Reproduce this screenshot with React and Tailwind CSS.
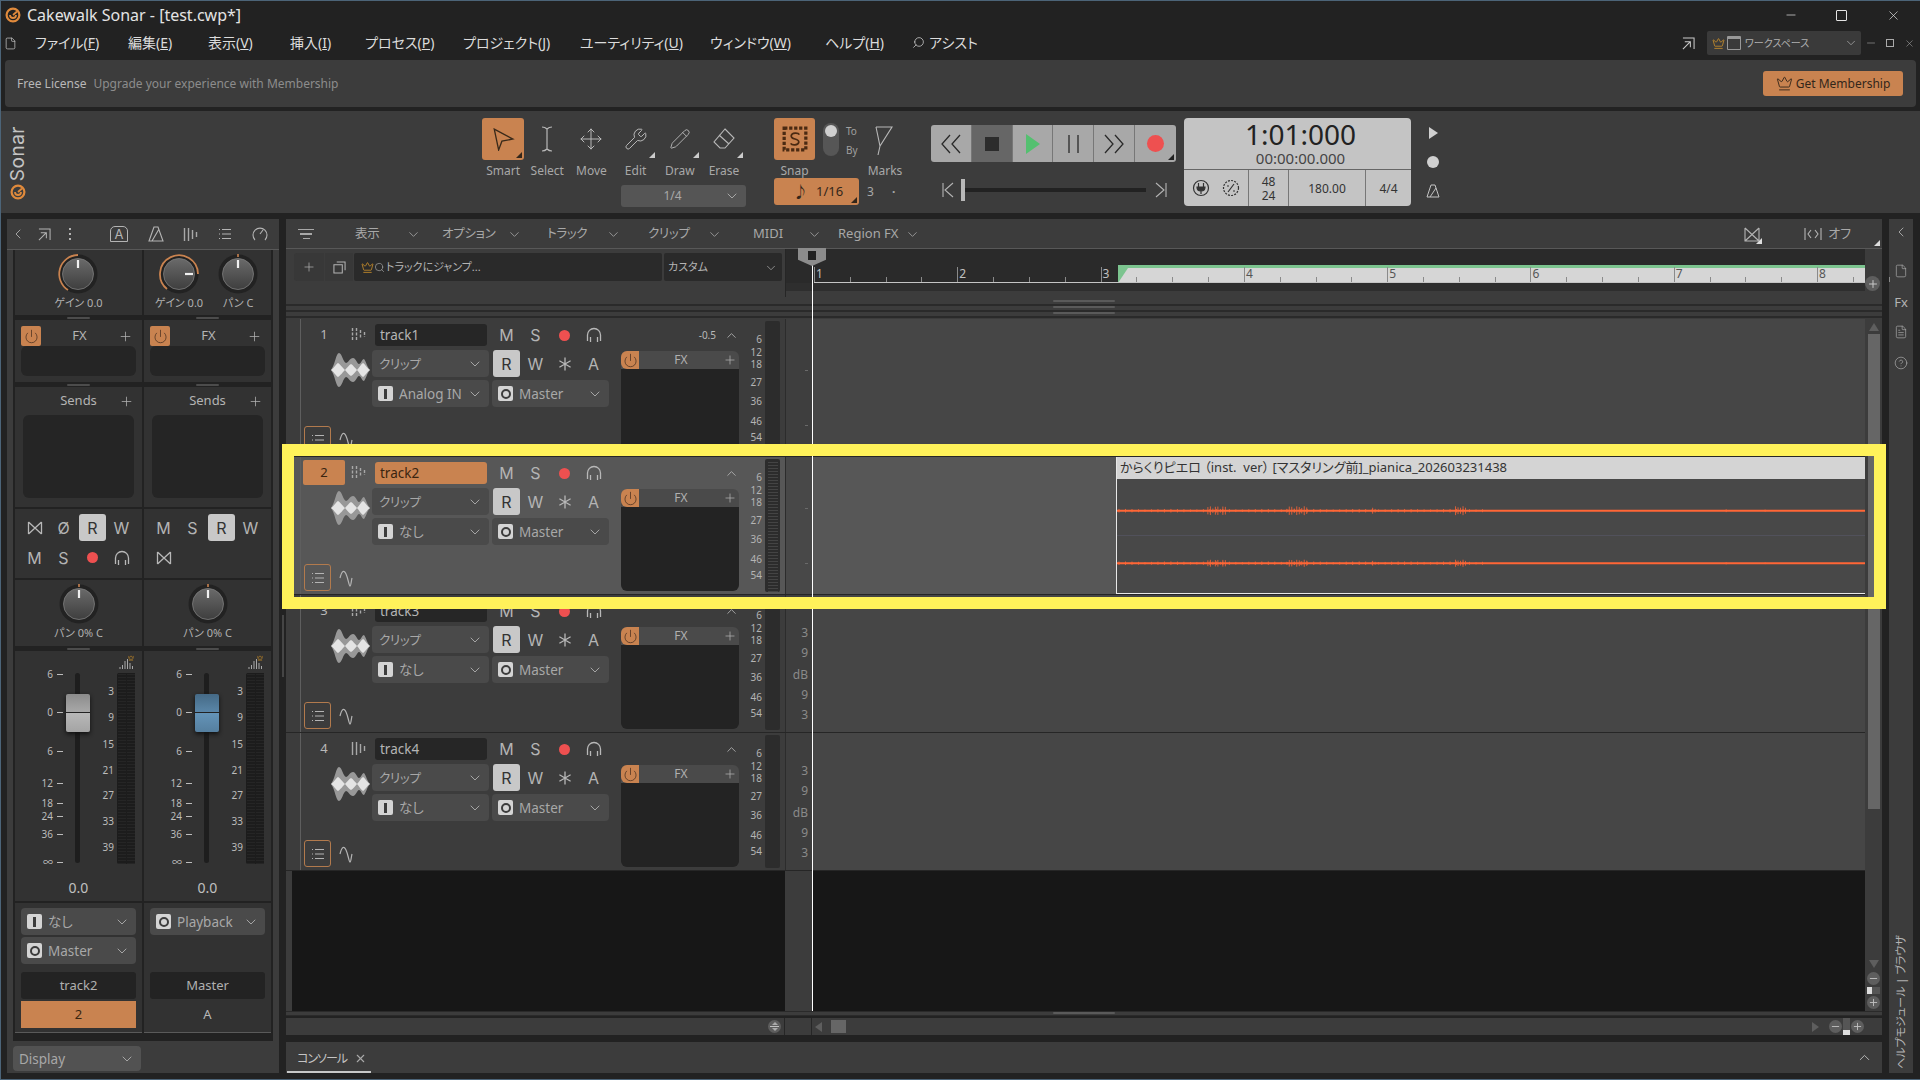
import React from 'react';
import { ChevronDown, ChevronUp, ChevronLeft, Plus, Power, X, Minus, Move, Wrench, Pencil, Search, Crown, File, HelpCircle, FileText } from 'lucide-react';

const ORANGE = 'bg-[#c98350]';

const CH = ({ className = 'w-4 h-4 text-[#b4b4b4]' }) => <ChevronDown className={className} strokeWidth={1.3} />;

const Corner = ({ className = 'border-b-[#ddd]' }) => (
  <span className={`absolute right-[2px] bottom-[2px] w-0 h-0 border-l-[6px] border-l-transparent border-b-[6px] ${className}`} />
);

function Logo({ className }) {
  return (
    <svg viewBox="0 0 16 16" className={className} fill="none">
      <circle cx="8" cy="8" r="6.4" stroke="#e08a3c" strokeWidth="2.2" />
      <path d="M8 8 L12 4.5 M5 8 a3 3 0 0 0 6 0" stroke="#e08a3c" strokeWidth="1.8" />
    </svg>
  );
}

function Bowtie() {
  return (
    <svg viewBox="0 0 16 16" className="w-4 h-4" fill="none" stroke="#b8b8b8" strokeWidth="1.3">
      <path d="M1.5 2 V14 M14.5 2 V14 M1.5 2 L14.5 14 M1.5 14 L14.5 2" />
    </svg>
  );
}

function Bars({ className = 'w-[15px] h-[15px]', dots }) {
  return (
    <svg viewBox="0 0 15 15" className={className} stroke="#a8a8a8" strokeWidth="1.4">
      <path d="M1.5 1 V14 M5.5 1 V14 M9.5 3 V12 M13.5 5 V10" strokeDasharray={dots ? '3 1.5' : undefined} />
    </svg>
  );
}

function ListIcon({ className = 'w-[14px] h-[14px]' }) {
  return (
    <svg viewBox="0 0 14 14" className={className} stroke="#b4b4b4" strokeWidth="1.2">
      <path d="M4 2.5 H13 M4 7 H13 M4 11.5 H13 M1 2.5 H2 M1 7 H2 M1 11.5 H2" />
    </svg>
  );
}

function Phones({ className = 'w-[16px] h-[16px]' }) {
  return (
    <svg viewBox="0 0 16 16" className={className} fill="none" stroke="#b8b8b8" strokeWidth="1.3">
      <path d="M1.5 14 V8 A6.5 6.5 0 0 1 14.5 8 V14 M4.5 10 V15 M11.5 10 V15" />
    </svg>
  );
}

function Star() {
  return (
    <svg viewBox="0 0 14 14" className="w-[14px] h-[14px]" fill="none" stroke="#b8b8b8" strokeWidth="1.3">
      <path d="M7 0.5 V13.5 M1.4 3.8 L12.6 10.2 M12.6 3.8 L1.4 10.2" />
    </svg>
  );
}

function WaveLogo() {
  return (
    <svg viewBox="0 0 39 34" className="w-[39px] h-[34px] shrink-0">
      <path d="M0 17 C4 12 5 0 8 0 C11 0 12 9 15 10 C17 10 19 5 22 5 C25 5 26 11 28 11 C30 11 31 6 33 6 C35 8 36 14 39 17 C36 20 35 26 33 28 C31 28 30 23 28 23 C26 23 25 29 22 29 C19 29 17 24 15 24 C12 25 11 34 8 34 C5 34 4 22 0 17 Z" fill="#989898" />
      <path d="M0 17 C3 15 5 11 7 10 C9 11 12 15 14 17 C16 15 18 12 20 11 C22 12 24 15 26 17 C28 15 30 11 32 10 C34 11 36 15 39 17 C36 19 34 23 32 24 C30 23 28 19 26 17 C24 19 22 22 20 23 C18 22 16 19 14 17 C12 19 9 23 7 24 C5 23 3 19 0 17 Z" fill="#e4e4e4" />
    </svg>
  );
}

function Curve() {
  return (
    <svg viewBox="0 0 16 20" className="w-[16px] h-[20px]" fill="none" stroke="#b4b4b4" strokeWidth="1.2">
      <path d="M1 10 C3 2 5 2 7 6 C9 10 10 18 11 18 C12 18 12 14 13 10" />
    </svg>
  );
}

function Knob({ arc, angle = 0, tick }) {
  const rad = ((angle - 90) * Math.PI) / 180;
  return (
    <svg viewBox="0 0 44 44" className="w-[44px] h-[44px]">
      <defs>
        <linearGradient id="knobFill" x1="0" y1="0" x2="0" y2="1">
          <stop offset="0" stopColor="#6a6a6a" />
          <stop offset="1" stopColor="#3e3e3e" />
        </linearGradient>
      </defs>
      <circle cx="22" cy="22" r="19.5" fill="#222" />
      {arc && <path d={arc} fill="none" stroke="#c98350" strokeWidth="1.8" />}
      {tick && <path d="M22 2 V5" stroke="#c98350" strokeWidth="1.6" />}
      <circle cx="22" cy="22" r="15.5" fill="url(#knobFill)" stroke="#7c7c7c" strokeWidth="0.8" />
      <path d={`M${22 + 6 * Math.cos(rad)} ${22 + 6 * Math.sin(rad)} L${22 + 14 * Math.cos(rad)} ${22 + 14 * Math.sin(rad)}`} stroke="#f0f0f0" strokeWidth="2.2" />
    </svg>
  );
}

function RouteBadge({ kind }) {
  return (
    <span className="w-[15px] h-[15px] rounded-[2px] bg-[#d4d4d4] flex items-center justify-center shrink-0">
      {kind === 'I'
        ? <span className="w-[3px] h-[10px] bg-[#3c3c3c]" />
        : <span className="w-[10px] h-[10px] rounded-full border-[2.5px] border-[#3c3c3c]" />}
    </span>
  );
}

function Drop({ kind, label, className = '', bg = 'bg-[#4a4a4a]', labelClass = 'ml-[6px]' }) {
  return (
    <div className={`h-[27px] rounded-[4px] ${bg} flex items-center pl-[6px] pr-[6px] text-[13.5px] text-[#a8a8a8] ${className}`}>
      {kind && <RouteBadge kind={kind} />}
      <span className={`flex-1 truncate pt-px ${labelClass}`}>{label}</span>
      <CH />
    </div>
  );
}

function Sep() {
  return (
    <div className="h-[5px] flex justify-center items-center">
      <span className="w-[23px] h-[2px] rounded-full bg-[#4c4c4c]" />
    </div>
  );
}

const Letter = ({ children, active }) => (
  <span className={`w-[27px] h-[27px] rounded-[3px] flex items-center justify-center text-[16px] [font-family:Inter,sans-serif] ${active ? 'bg-[#c8c8c8] text-[#333]' : 'text-[#b4b4b4]'}`}>
    {children}
  </span>
);

const Rec = () => <span className="w-[11px] h-[11px] rounded-full bg-[#ee5050]" />;

const dbMarks = [
  ['6', 23], ['0', 61], ['6', 100], ['12', 132], ['18', 152], ['24', 165], ['36', 183], ['∞', 211],
];
const meterMarks = [
  ['3', 40], ['9', 66], ['15', 93], ['21', 119], ['27', 144], ['33', 170], ['39', 196],
];

function Fader({ blue }) {
  return (
    <div className="h-[250px] bg-[#323232] relative text-[10px] text-[#bcbcbc]">
      {dbMarks.map(([t, y]) => (
        <div key={t + y} className="absolute left-[10px] w-[38px] flex items-center justify-end h-[12px] -mt-[6px]" style={{ top: y }}>
          <span>{t}</span>
          <span className="ml-[4px] w-[6px] h-px bg-[#bcbcbc]" />
        </div>
      ))}
      <div className="absolute left-[60px] top-[22px] w-[5px] h-[190px] rounded-full bg-[#1e1e1e]" />
      <div className="absolute left-[51px] top-[43px] w-[24px] h-[38px] rounded-[2px] shadow-[0_2px_4px_#111] flex flex-col">
        <div className={`h-[19px] border-b border-[#222] rounded-t-[2px] bg-gradient-to-b ${blue ? 'from-[#456a86] to-[#5a86a8]' : 'from-[#8c8c8c] to-[#a8a8a8]'}`} />
        <div className={`h-[19px] rounded-b-[2px] bg-gradient-to-b ${blue ? 'from-[#6494b8] to-[#557f9f]' : 'from-[#b8b8b8] to-[#a4a4a4]'}`} />
      </div>
      {meterMarks.map(([t, y]) => (
        <div key={t} className="absolute left-[85px] w-[14px] text-right h-[12px] leading-[12px] -mt-[6px]" style={{ top: y }}>{t}</div>
      ))}
      <svg viewBox="0 0 15 11" className="absolute left-[104px] top-[7px] w-[15px] h-[11px]" stroke="#a8a8a8" strokeWidth="1">
        <path d="M1 11 V9 M3.5 11 V7 M6 11 V3 M8.5 11 V1 M11 11 V5 M13.5 11 V8" />
      </svg>
      <Crown className="absolute left-[113px] top-[4px] w-[6px] h-[6px] text-[#d6962a]" />
      <div className="absolute left-[102px] top-[22px] w-[18px] h-[191px] rounded-[2px] bg-[#1c1c1c] flex justify-center gap-[1px]">
        <span className="w-[8px] bg-[repeating-linear-gradient(0deg,#252525_0px,#252525_1px,#1c1c1c_1px,#1c1c1c_3px)]" />
        <span className="w-[8px] bg-[repeating-linear-gradient(0deg,#252525_0px,#252525_1px,#1c1c1c_1px,#1c1c1c_3px)]" />
      </div>
      <div className="absolute left-0 right-0 top-[227px] text-center text-[14px] leading-[20px] text-[#c0c0c0]">0.0</div>
    </div>
  );
}

function Strip({ knobs, letters, routes, name, number, numberActive, blue }) {
  return (
    <div className="w-[127px] flex flex-col">
      <div className="h-[65px] bg-[#323232] flex justify-center gap-[13px]">{knobs}</div>
      <Sep />
      <div className="h-[62px] bg-[#323232] px-[6px] pt-[6px]">
        <div className="h-[20px] flex items-center text-[13px] text-[#b4b4b4]">
          <span className={`w-[20px] h-[20px] rounded-[2px] ${ORANGE} flex items-center justify-center`}>
            <Power className="w-[15px] h-[15px] text-[#4a3020]" strokeWidth={1.2} />
          </span>
          <span className="flex-1 text-center">FX</span>
          <Plus className="w-[15px] h-[15px] mr-[3px]" strokeWidth={1.2} />
        </div>
        <div className="h-[30px] rounded-[6px] bg-[#252525]" />
      </div>
      <Sep />
      <div className="h-[120px] bg-[#323232] px-[8px] pt-[5px]">
        <div className="h-[18px] flex items-center text-[13px] text-[#b4b4b4]">
          <span className="flex-1 text-center pl-[15px]">Sends</span>
          <Plus className="w-[15px] h-[15px]" strokeWidth={1.2} />
        </div>
        <div className="mt-[5px] h-[83px] rounded-[6px] bg-[#252525]" />
      </div>
      <div className="h-[2px]" />
      <div className="h-[69px] bg-[#323232] px-[5px] pt-[5px] grid grid-cols-[repeat(4,29px)] auto-rows-[30px] justify-items-center items-start">
        {letters}
      </div>
      <div className="h-[2px]" />
      <div className="h-[66px] bg-[#323232] flex flex-col items-center pt-[2px]">
        <Knob tick />
        <span className="mt-[1px] text-[11px] leading-[12px] text-[#b0b0b0]">パン 0% C</span>
      </div>
      <Sep />
      <Fader blue={blue} />
      <div className="h-[130px] mt-[2px] bg-[#323232] px-[6px] pt-[5px] border-b border-[#5a5a5a] flex flex-col">
        <div className="h-[56px] flex flex-col gap-[2px]">{routes}</div>
        <div className="mt-[8px] h-[27px] rounded-[3px] bg-[#232323] flex items-center justify-center text-[13px] text-[#b0b0b0]">{name}</div>
        <div className={`mt-[2px] h-[27px] flex items-center justify-center text-[13px] ${numberActive ? `${ORANGE} text-[#3a2510]` : 'text-[#b8b8b8]'}`}>{number}</div>
      </div>
    </div>
  );
}

const KnobLabeled = ({ label, ...rest }) => (
  <div className="flex flex-col items-center pt-[2px]">
    <Knob {...rest} />
    <span className="mt-[1px] text-[11px] leading-[12px] text-[#b0b0b0] whitespace-nowrap">{label}</span>
  </div>
);

function LeftPanel() {
  return (
    <div className="w-[272px] flex flex-col bg-[#3c3c3c]">
      <div className="h-[31px] flex items-center border-b border-[#585858] text-[#b4b4b4] pl-[3px]">
        <ChevronLeft className="w-[16px] h-[16px]" strokeWidth={1.3} />
        <svg viewBox="0 0 14 14" className="ml-[12px] w-[13px] h-[13px]" fill="none" stroke="#b4b4b4" strokeWidth="1.1"><path d="M1 1 H13 V13 M9 5 L1 13 M3 5 H9 V11" /></svg>
        <span className="ml-[18px] w-[2px] flex flex-col gap-[3px]"><i className="h-[2px] bg-[#b4b4b4]" /><i className="h-[2px] bg-[#b4b4b4]" /><i className="h-[2px] bg-[#b4b4b4]" /></span>
        <span className="ml-[39px] w-[18px] h-[16px] border border-[#b4b4b4] rounded-t-[5px] flex items-center justify-center text-[13px] leading-none [font-family:Inter,sans-serif]">A</span>
        <svg viewBox="0 0 16 16" className="ml-[20px] w-[16px] h-[16px]" fill="none" stroke="#b4b4b4" strokeWidth="1.1"><path d="M6 1 L1 15 H15 L10 1 Z M4 15 L11 3" /></svg>
        <span className="ml-[19px]"><Bars /></span>
        <span className="ml-[20px]"><ListIcon /></span>
        <svg viewBox="0 0 16 16" className="ml-[20px] w-[16px] h-[16px]" fill="none" stroke="#b4b4b4" strokeWidth="1.1"><path d="M3 14 A7 7 0 1 1 13 14 M8 8 L11 4" /></svg>
      </div>
      <div className="h-[791px] flex pl-[6px] pr-[6px]">
        <div className="flex gap-[2px] bg-[#222] px-[2px]">
          <Strip
            knobs={<KnobLabeled label="ゲイン 0.0" arc="M12 38 A19 19 0 0 1 22 3" />}
            letters={<>
              <span className="h-[27px] flex items-center"><Bowtie /></span>
              <span className="h-[27px] flex items-center"><Letter>Ø</Letter></span>
              <Letter active>R</Letter>
              <Letter>W</Letter>
              <Letter>M</Letter>
              <Letter>S</Letter>
              <span className="h-[27px] flex items-center"><Rec /></span>
              <span className="h-[27px] flex items-center"><Phones /></span>
            </>}
            routes={<>
              <Drop kind="I" label="なし" />
              <Drop kind="O" label="Master" />
            </>}
            name="track2"
            number="2"
            numberActive
          />
          <Strip
            knobs={<>
              <KnobLabeled label="ゲイン 0.0" angle={90} arc="M10 37 A19 19 0 1 1 41 22" />
              <KnobLabeled label="パン C" tick />
            </>}
            letters={<>
              <Letter>M</Letter>
              <Letter>S</Letter>
              <Letter active>R</Letter>
              <Letter>W</Letter>
              <span className="h-[27px] flex items-center"><Bowtie /></span>
            </>}
            routes={<Drop kind="O" label="Playback" />}
            name="Master"
            number="A"
            blue
          />
        </div>
      </div>
      <div className="h-[32px] pl-[6px] pt-[5px]">
        <Drop label="Display" className="w-[128px] !h-[25px] !bg-[#525252]" labelClass="ml-0" />
      </div>
    </div>
  );
}

function Track({ n, name, input, selected, vol, db }) {
  const rowBg = selected ? 'bg-[#575757]' : 'bg-[#3c3c3c]';
  const ddBg = 'bg-[#4a4a4a]';
  return (
    <div className="h-[138px] flex border-b-[1.5px] border-[#262626]">
      <div className="w-[6px] bg-[#3c3c3c]" />
      <div className={`w-[493px] h-full flex ${rowBg}`}>
        <div className="w-[9px] border-r border-[#5e5e5e]" />
        <div className="w-[71px] flex flex-col pl-[2px]">
          <div className="mt-[3px] h-[25px] flex items-center">
            <span className={`w-[42px] h-[25px] rounded-[2px] flex items-center justify-center text-[13px] ${selected ? `${ORANGE} text-[#3a2510]` : 'text-[#b8b8b8]'}`}>{n}</span>
            <span className="ml-[6px]"><Bars dots={n < 4} /></span>
          </div>
          <div className="mt-[6px] ml-[28px]"><WaveLogo /></div>
          <div className="mt-auto mb-[3px] ml-[1px] flex items-center">
            <span className="w-[27px] h-[27px] rounded-[3px] border border-[#b27a4d] flex items-center justify-center"><ListIcon /></span>
            <span className="ml-[8px]"><Curve /></span>
          </div>
        </div>
        <div className="w-[237px] flex flex-col pt-[5px]">
          <div className="h-[22px] flex items-center">
            <div className={`ml-[3px] w-[112px] h-[22px] rounded-[3px] flex items-center pl-[5px] text-[13.5px] ${selected ? `${ORANGE} text-[#3a2510]` : 'bg-[#262626] text-[#b4b4b4]'}`}>{name}</div>
            <div className="ml-[5px] w-[116px] grid grid-cols-4 justify-items-center items-center">
              <Letter>M</Letter>
              <Letter>S</Letter>
              <Rec />
              <Phones />
            </div>
          </div>
          <div className="mt-[4px] h-[27px] flex items-center">
            <Drop label="クリップ" className="w-[117px]" bg={ddBg} labelClass="ml-[1px] mt-[2px] text-[12.5px] tracking-[-0.3px]" />
            <div className="ml-[3px] w-[116px] grid grid-cols-4 justify-items-center items-center">
              <Letter active>R</Letter>
              <Letter>W</Letter>
              <Star />
              <Letter>A</Letter>
            </div>
          </div>
          <div className="mt-[3px] h-[27px] flex items-center">
            <Drop kind="I" label={input} className="w-[117px]" bg={ddBg} />
            <Drop kind="O" label="Master" className="ml-[3px] w-[117px]" bg={ddBg} />
          </div>
        </div>
        <div className="ml-[12px] w-[118px] flex flex-col">
          <div className="h-[32px] flex items-center justify-end text-[#b8b8b8]">
            {vol && <span className="mr-[8px] text-[10px]">{vol}</span>}
            <ChevronUp className="w-[15px] h-[15px]" strokeWidth={1.3} />
          </div>
          <div className="h-[18px] bg-[#4a4a4a] rounded-t-[6px] flex items-center text-[12px] text-[#b0b0b0]">
            <span className={`w-[18px] h-[18px] rounded-l-[6px] ${ORANGE} flex items-center justify-center`}>
              <Power className="w-[15px] h-[15px] text-[#4a3020]" strokeWidth={1.2} />
            </span>
            <span className="flex-1 text-center">FX</span>
            <Plus className="w-[14px] h-[14px] mr-[2px]" strokeWidth={1.3} />
          </div>
          <div className="h-[84px] rounded-b-[6px] bg-[#232323]" />
        </div>
        <div className="w-[26px] relative text-[10px] text-[#b4b4b4]">
          {[['6', 20], ['12', 33], ['18', 45], ['27', 63], ['36', 82], ['46', 102], ['54', 118]].map(([t, y]) => (
            <span key={t} className="absolute right-[3px] leading-[12px] -mt-[6px]" style={{ top: y }}>{t}</span>
          ))}
        </div>
        <div className="my-[2px] w-[15px] rounded-[2px] bg-[#2c2c2c] flex justify-center">
          {selected && <span className="w-[10px] mt-[2px] bg-[repeating-linear-gradient(0deg,#444_0px,#444_1px,#2c2c2c_1px,#2c2c2c_3px)]" />}
        </div>
        <div className="w-[3px]" />
      </div>
      <div className={`w-[28px] relative border-l border-[#2c2c2c] text-[12px] text-[#8a8a8a] ${selected ? 'bg-[#484848]' : 'bg-[#3e3e3e]'}`}>
        {db
          ? [['3', 38], ['9', 58], ['dB', 80], ['9', 100], ['3', 120]].map(([t, y]) => (
              <span key={t + y} className="absolute right-[5px] leading-[14px] -mt-[7px]" style={{ top: y }}>{t}</span>
            ))
          : [51, 106].map((y) => <span key={y} className="absolute right-[5px] w-[3px] h-px bg-[#6a6a6a]" style={{ top: y }} />)}
      </div>
      <div className={`flex-1 ${selected ? 'bg-[#575757]' : 'bg-[#464646]'} flex`}>
        {selected && <Clip />}
      </div>
    </div>
  );
}

function wavePath(y, scale = 1) {
  const bursts = [[91, 110, 4.5], [170, 192, 4.5], [256, 260, 3], [339, 350, 4.5], [610, 611, 2.5], [649, 650, 1.5]];
  let d = '';
  for (const [a, b, h] of bursts) {
    for (let x = a; x <= b; x += 2.5) {
      const amp = h * scale * (0.4 + 0.6 * Math.abs(Math.sin(x * 1.7)));
      d += `M${x} ${y - amp} V${y + amp} `;
    }
  }
  for (let x = 2; x < 370; x += 6.5) {
    const amp = 1.2 + 0.6 * Math.abs(Math.sin(x * 0.9));
    d += `M${x} ${y - amp} V${y + amp} `;
  }
  return d;
}

function Clip() {
  return (
    <div className="ml-[303px] flex-1 flex flex-col border-l border-b border-[#e8e8e8] bg-[#484848]">
      <div className="h-[22px] bg-[#d4d4d4] flex items-center pl-[3px] text-[13px] text-[#333] whitespace-pre">
        からくりピエロ （inst.  ver） [マスタリング前]_pianica_202603231438
      </div>
      <svg viewBox="0 0 749 115" preserveAspectRatio="none" className="flex-1 w-full">
        <path d="M0 57 H749" stroke="#52525c" strokeWidth="1" />
        <path d="M0 32 H749 M0 85 H749" stroke="#ff6636" strokeWidth="2" />
        <path d={wavePath(32) + wavePath(85, 0.8)} stroke="#ff6636" strokeWidth="0.8" fill="none" />
      </svg>
    </div>
  );
}

function Ruler() {
  const nums = ['1', '2', '3', '4', '5', '6', '7', '8'];
  return (
    <div className="w-[1080px] flex flex-col relative border-l border-[#262626]">
      <div className="h-[34px] bg-[#2a2a2a] relative">
        <div className="absolute left-[332px] right-0 top-[16px] h-[18px] bg-[#7cc48f]">
          <div className="h-[15px] mt-[3px] bg-[#d6d6d6] [clip-path:polygon(10px_0,100%_0,100%_100%,0_100%)]" />
        </div>
        <div className="absolute left-[28px] right-0 bottom-0 h-[15px] flex border-b border-[#c4c4c4]">
          {nums.map((t, i) => (
            <div key={t} className="w-[143.3px] shrink-0 flex items-end">
              <div className={`w-1/4 h-[15px] border-l border-[#8a8a8a] pl-[1px] text-[12px] leading-[14px] ${i < 3 ? 'text-[#c0c0c0]' : 'text-[#555]'}`}>{t}</div>
              <div className="w-1/4 h-[5px] border-l border-[#8a8a8a]" />
              <div className="w-1/4 h-[5px] border-l border-[#8a8a8a]" />
              <div className="w-1/4 h-[5px] border-l border-[#8a8a8a]" />
            </div>
          ))}
        </div>
      </div>
      <div className="h-[8px] bg-[#2e2e2e]" />
      <div className="h-[6px] bg-[#3c3c3c]" />
    </div>
  );
}

const HeaderMenu = ({ label, className, latin }) => (
  <div className={`flex items-center justify-between shrink-0 ${className}`}>
    <span className={`${latin ? 'text-[13px]' : 'text-[12.5px] tracking-[-0.3px]'} text-[#a8a8a8] whitespace-nowrap`}>{label}</span>
    <CH className="w-[15px] h-[15px] text-[#a8a8a8]" />
  </div>
);

function CenterPanel() {
  return (
    <div className="w-[1596px] flex flex-col relative">
      <div className="h-[30px] bg-[#3c3c3c] border-b border-[#585858] flex items-center pl-[12px] pt-[1px] relative">
        <span className="w-[16px] flex flex-col gap-[3px] items-center">
          <i className="w-[16px] h-[1.5px] bg-[#a8a8a8]" /><i className="w-[12px] h-[1.5px] bg-[#a8a8a8]" /><i className="w-[7px] h-[1.5px] bg-[#a8a8a8]" />
        </span>
        <div className="ml-[41px] flex items-center">
          <HeaderMenu label="表示" className="w-[66px]" />
          <HeaderMenu label="オプション" className="w-[80px] ml-[21px]" />
          <HeaderMenu label="トラック" className="w-[74px] ml-[25px]" />
          <HeaderMenu label="クリップ" className="w-[74px] ml-[27px]" />
          <HeaderMenu label="MIDI" className="w-[69px] ml-[31px]" latin />
          <HeaderMenu label="Region FX" className="w-[82px] ml-[16px]" latin />
        </div>
        <div className="ml-auto flex items-center text-[13px] text-[#a8a8a8] pr-[31px]">
          <span className="relative w-[24px] h-[24px] flex items-center justify-center">
            <svg viewBox="0 0 16 16" className="w-[16px] h-[16px]" fill="none" stroke="#b4b4b4" strokeWidth="1.1"><path d="M1 2 V15 H15 V2 M1 2 L15 15 M15 2 L1 15" /></svg>
            <Corner />
          </span>
          <span className="ml-[40px] flex items-center gap-[6px]">
            <svg viewBox="0 0 18 14" className="w-[18px] h-[14px]" fill="none" stroke="#b4b4b4" strokeWidth="1.1"><path d="M1 1 V13 M17 1 V13 M7 3 L4 7 L7 11 M11 3 L14 7 L11 11" /></svg>
            オフ
          </span>
        </div>
        <Corner />
      </div>
      <div className="h-[48px] flex">
        <div className="w-[499px] bg-[#3c3c3c] flex pl-[8px] pt-[4px] text-[#b4b4b4]">
          <span className="w-[30px] h-[28px] rounded-l-[3px] bg-[#383838] flex items-center justify-center"><Plus className="w-[14px] h-[14px]" strokeWidth={1.2} /></span>
          <span className="ml-px w-[28px] h-[28px] bg-[#383838] flex items-center justify-center">
            <svg viewBox="0 0 14 14" className="w-[13px] h-[13px]" fill="none" stroke="#b4b4b4" strokeWidth="1.1"><path d="M1 4 H10 V13 H1 Z M4 1 H13 V10" /></svg>
          </span>
          <div className="ml-px w-[308px] h-[28px] bg-[#2a2a2a] rounded-[2px] flex items-center pl-[7px] text-[11px]">
            <Crown className="w-[13px] h-[13px] text-[#d6962a]" strokeWidth={1.4} />
            <Search className="w-[11px] h-[11px]" strokeWidth={1.3} />
            <span className="ml-[1px] pt-px">トラックにジャンプ...</span>
          </div>
          <div className="ml-[2px] w-[118px] h-[28px] bg-[#2a2a2a] rounded-[2px] flex items-center justify-between px-[4px] pt-px text-[11px]">
            カスタム<CH className="w-[14px] h-[14px] text-[#a8a8a8]" />
          </div>
        </div>
        <Ruler />
        <div className="w-[17px] bg-[#3c3c3c]" />
      </div>
      <div className="h-[22px] bg-[#3c3c3c] flex flex-col pt-[3px]">
        {[0, 1, 2].map((i) => (
          <div key={i} className="h-[6px] border-b-2 border-[#2a2a2a] flex justify-center">
            <span className="w-[62px] h-[2px] rounded-full bg-[#5a5a5a]" />
          </div>
        ))}
      </div>
      <div className="h-[692px] flex bg-[#171717]">
        <div className="w-[1579px] flex flex-col">
          <Track n={1} name="track1" input="Analog IN" vol="-0.5" />
          <Track n={2} name="track2" input="なし" selected />
          <Track n={3} name="track3" input="なし" db />
          <Track n={4} name="track4" input="なし" db />
          <div className="flex-1 flex">
            <div className="w-[6px] bg-[#3c3c3c]" />
            <div className="w-[493px]" />
            <div className="w-[28px] bg-[#3c3c3c]" />
          </div>
        </div>
        <div className="w-[17px] bg-[#3c3c3c] flex flex-col items-center pt-[4px] pb-[2px]">
          <span className="w-0 h-0 border-x-[5px] border-x-transparent border-b-[8px] border-b-[#5e5e5e]" />
          <span className="mt-[3px] h-[475px] w-[12px] bg-[#666]" />
          <span className="mt-auto w-0 h-0 border-x-[5px] border-x-transparent border-t-[8px] border-t-[#5e5e5e]" />
          <span className="mt-[4px] w-[13px] h-[13px] rounded-full bg-[#5e5e5e] flex items-center justify-center"><Minus className="w-[11px] h-[11px] text-[#c0c0c0]" /></span>
          <span className="mt-[2px] w-[13px] h-[7px] bg-[#555] flex"><i className="w-[5px] bg-[#ddd]" /></span>
          <span className="mt-[2px] w-[13px] h-[13px] rounded-full bg-[#5e5e5e] flex items-center justify-center"><Plus className="w-[11px] h-[11px] text-[#c0c0c0]" /></span>
        </div>
      </div>
      <div className="h-[5px] bg-[#3c3c3c] border-y border-[#2a2a2a] flex justify-center">
        <span className="w-[62px] h-[2px] rounded-full bg-[#5a5a5a]" />
      </div>
      <div className="h-[2px]" />
      <div className="h-[17px] bg-[#3c3c3c] flex items-center">
        <div className="w-[499px] flex justify-end pr-[3px] border-r border-[#262626] h-full items-center">
          <span className="w-[13px] h-[13px] rounded-full bg-[#5e5e5e] flex flex-col items-center justify-center">
            <span className="w-0 h-0 border-x-[3px] border-x-transparent border-b-[3px] border-b-[#aaa]" />
            <i className="my-[1px] w-[9px] h-px bg-[#c0c0c0]" />
            <span className="w-0 h-0 border-x-[3px] border-x-transparent border-t-[3px] border-t-[#aaa]" />
          </span>
        </div>
        <div className="w-[27px] h-full border-r border-[#262626]" />
        <span className="ml-[3px] w-0 h-0 border-y-[5px] border-y-transparent border-r-[7px] border-r-[#5e5e5e]" />
        <span className="ml-[9px] w-[15px] h-[13px] bg-[#666]" />
        <span className="ml-auto w-0 h-0 border-y-[5px] border-y-transparent border-l-[7px] border-l-[#5e5e5e]" />
        <span className="ml-[10px] w-[13px] h-[13px] rounded-full bg-[#5e5e5e] flex items-center justify-center"><Minus className="w-[11px] h-[11px] text-[#c0c0c0]" /></span>
        <span className="ml-[1px] w-[7px] h-[17px] bg-[#555] flex items-end"><i className="w-[7px] h-[5px] bg-[#ddd]" /></span>
        <span className="ml-px mr-[18px] w-[13px] h-[13px] rounded-full bg-[#5e5e5e] flex items-center justify-center"><Plus className="w-[11px] h-[11px] text-[#c0c0c0]" /></span>
      </div>
      <div className="h-[7px]" />
      <div className="h-[31px] bg-[#3c3c3c] flex items-center">
        <div className="ml-px w-[84px] h-full flex items-center border-b-2 border-[#c8c8c8] pl-[10px] pt-[4px] text-[12px] tracking-[-1px] text-[#c4c4c4] whitespace-nowrap">
          コンソール
          <X className="ml-[7px] w-[13px] h-[13px] shrink-0 text-[#aaa]" strokeWidth={2} />
        </div>
        <ChevronUp className="ml-auto mr-[9px] w-[17px] h-[17px] text-[#c0c0c0]" strokeWidth={1.3} />
      </div>

      {/* playhead */}
      <div className="absolute left-[526px] top-[46px] h-[746px] w-px bg-white" />
      <div className="absolute left-[512px] top-[29px] w-[28px] h-[18px] bg-[#8c8c8c] [clip-path:polygon(0_0,100%_0,100%_65%,50%_100%,0_65%)] flex justify-center pt-[3px]">
        <span className="w-[8px] h-[9px] bg-[#222]" />
      </div>
      <span className="absolute left-[1579px] top-[57px] w-[15px] h-[15px] rounded-full bg-[#5e5e5e] flex items-center justify-center"><Plus className="w-[12px] h-[12px] text-[#c8c8c8]" /></span>
    </div>
  );
}

function RightRail() {
  return (
    <div className="w-[24px] ml-[7px] bg-[#3c3c3c] flex flex-col items-center pt-[5px] pb-[6px] text-[#b4b4b4]">
      <ChevronLeft className="w-[16px] h-[16px]" strokeWidth={1.3} />
      <File className="mt-[23px] w-[14px] h-[16px]" strokeWidth={1.1} />
      <span className="mt-[15px] text-[13px] leading-[16px]">Fx</span>
      <FileText className="mt-[14px] w-[14px] h-[16px]" strokeWidth={1.1} />
      <HelpCircle className="mt-[16px] w-[14px] h-[14px]" strokeWidth={1.1} />
      <div className="mt-auto h-[130px] w-[14px] flex items-center justify-center">
        <span className="-rotate-90 text-[11px] leading-[14px] whitespace-nowrap">ヘルプモジュール | ブラウザ</span>
      </div>
    </div>
  );
}

function Tool({ label, icon, active, corner }) {
  return (
    <div className="w-[44.5px] flex flex-col items-center">
      <div className={`relative w-[42px] h-[42px] rounded-[3px] flex items-center justify-center ${active ? ORANGE : ''}`}>
        {icon}
        {corner && <Corner className={active ? 'border-b-[#33261a]' : 'border-b-[#ccc]'} />}
      </div>
      <span className="mt-[3px] text-[12px] leading-[16px] text-[#a8a8a8]">{label}</span>
    </div>
  );
}

function TransportBtn({ children, pressed }) {
  return (
    <div className={`relative w-[41px] h-full flex items-center justify-center border-r border-[#777] last:border-r-0 ${pressed ? 'bg-[#666]' : 'bg-[#a8a8a8]'}`}>
      {children}
    </div>
  );
}

function Toolbar() {
  const grey = 'text-[#b8b8b8]';
  return (
    <div className="h-[102px] bg-[#3c3c3c] flex pl-[8px]">
      <div className="w-[18px] flex flex-col items-center justify-end pb-[13px]">
        <span className="[writing-mode:vertical-rl] rotate-180 text-[19px] leading-[18px] text-[#c4c4c4] tracking-[0.5px] [font-family:Inter,sans-serif]">Sonar</span>
        <Logo className="mt-[3px] w-[16px] h-[16px]" />
      </div>
      <div className="ml-[454px] w-[265px] flex flex-col pt-[7px]">
        <div className="flex">
          <Tool label="Smart" active corner icon={
            <svg viewBox="0 0 22 22" className="w-[24px] h-[24px]" fill="none" stroke="#3a2a1a" strokeWidth="1.2"><path d="M3 2 L20 11 L10 13 L7 21 Z" /></svg>
          } />
          <Tool label="Select" icon={
            <svg viewBox="0 0 14 26" className="w-[14px] h-[26px]" fill="none" stroke="#b8b8b8" strokeWidth="1.2"><path d="M2 1 C5 1 6 2 7 3 C8 2 9 1 12 1 M7 3 V23 M2 25 C5 25 6 24 7 23 C8 24 9 25 12 25" /></svg>
          } />
          <Tool label="Move" icon={<Move className={`w-[24px] h-[24px] ${grey}`} strokeWidth={1} />} />
          <Tool label="Edit" corner icon={<Wrench className={`w-[24px] h-[24px] ${grey}`} strokeWidth={1} />} />
          <Tool label="Draw" corner icon={<Pencil className={`w-[22px] h-[22px] ${grey}`} strokeWidth={1} />} />
          <Tool label="Erase" corner icon={
            <svg viewBox="0 0 24 24" className="w-[24px] h-[24px]" fill="none" stroke="#b8b8b8" strokeWidth="1.1"><path d="M13 2 L22 11 L13 21 H8 L2 15 Z M7 8 L17 17" /></svg>
          } />
        </div>
        <div className="mt-[6px] ml-[140px] w-[125px] h-[22px] rounded-[3px] bg-[#555] flex items-center text-[12px] text-[#a8a8a8] pr-[6px]">
          <span className="flex-1 text-center">1/4</span><CH />
        </div>
      </div>
      <div className="ml-[28px] w-[136px] flex flex-col pt-[7px]">
        <div className="flex h-[42px]">
          <div className={`w-[41px] h-[42px] rounded-[3px] ${ORANGE} flex items-center justify-center`}>
            <svg viewBox="0 0 24 24" className="w-[26px] h-[26px]" fill="none" stroke="#4a2a12" strokeWidth="1.5">
              <path d="M2 2 H22 V22 H2 Z" strokeDasharray="3 1.6" strokeWidth="3" />
              <path d="M16 8 C15 6 9 6 8.5 9 C8 13 16 11 15.5 15 C15 18 9 18 8 16" />
            </svg>
          </div>
          <div className="ml-[8px] mt-[5px] w-[16px] h-[33px] rounded-full bg-[#565656] pt-[2px] flex justify-center">
            <span className="w-[12px] h-[12px] rounded-full bg-[#cfcfcf]" />
          </div>
          <div className="ml-[7px] mt-[4px] flex flex-col text-[10px] leading-[19px] text-[#a0a0a0]"><span>To</span><span>By</span></div>
          <svg viewBox="0 0 18 30" className="ml-[17px] mt-[8px] w-[18px] h-[30px]" fill="none" stroke="#b8b8b8" strokeWidth="1.1"><path d="M1 1 H17 L5 20 L1 1 M5 20 L3 29" /></svg>
        </div>
        <div className="flex text-[12px] leading-[16px] text-[#a8a8a8] mt-[3px]">
          <span className="w-[41px] text-center">Snap</span>
          <span className="ml-[50px] w-[40px] text-center">Marks</span>
        </div>
        <div className="flex items-center mt-[-1px] h-[27px] text-[12px] text-[#a8a8a8]">
          <div className={`relative w-[85px] h-[27px] rounded-[3px] ${ORANGE} flex items-center text-[#33261a] pl-[19px]`}>
            <span className="text-[15px] leading-none">♪</span>
            <span className="ml-[8px] text-[13px]">1/16</span>
            <Corner className="border-b-[#33261a]" />
          </div>
          <span className="ml-[8px]">3</span>
          <span className="ml-[18px] font-bold">·</span>
        </div>
      </div>
      <div className="ml-[21px] w-[245px] flex flex-col pt-[14px]">
        <div className="h-[37px] rounded-[3px] overflow-hidden flex">
          <TransportBtn>
            <svg viewBox="0 0 22 20" className="w-[22px] h-[20px]" fill="none" stroke="#2a2a2a" strokeWidth="1.3"><path d="M10 1 L2 10 L10 19 M20 1 L12 10 L20 19" /></svg>
          </TransportBtn>
          <TransportBtn pressed><span className="w-[14px] h-[14px] bg-[#2c2c2c]" /></TransportBtn>
          <TransportBtn><span className="w-0 h-0 border-y-[10px] border-y-transparent border-l-[14px] border-l-[#54c070]" /></TransportBtn>
          <TransportBtn><span className="w-[11px] h-[18px] border-x-2 border-[#555]" /></TransportBtn>
          <TransportBtn>
            <svg viewBox="0 0 22 20" className="w-[22px] h-[20px]" fill="none" stroke="#2a2a2a" strokeWidth="1.3"><path d="M2 1 L10 10 L2 19 M12 1 L20 10 L12 19" /></svg>
          </TransportBtn>
          <TransportBtn>
            <span className="w-[17px] h-[17px] rounded-full bg-[#ee5050]" />
            <Corner className="border-b-[#222]" />
          </TransportBtn>
        </div>
        <div className="mt-[17px] h-[22px] flex items-center text-[#b4b4b4]">
          <svg viewBox="0 0 12 16" className="ml-[11px] w-[12px] h-[16px]" fill="none" stroke="#b4b4b4" strokeWidth="1.1"><path d="M1 1 V15 M11 1 L3 8 L11 15" /></svg>
          <div className="ml-[7px] w-[185px] h-[4px] bg-[#222] relative">
            <span className="absolute left-0 -top-[9px] w-[4px] h-[22px] bg-[#b8b8b8]" />
          </div>
          <svg viewBox="0 0 12 16" className="ml-[9px] w-[12px] h-[16px]" fill="none" stroke="#b4b4b4" strokeWidth="1.1"><path d="M11 1 V15 M1 1 L9 8 L1 15" /></svg>
        </div>
      </div>
      <div className="ml-[8px] mt-[7px] w-[227px] h-[88px] rounded-[4px] bg-[#c4c4c4] flex flex-col text-[#333]">
        <div className="h-[52px] flex flex-col items-center border-b border-[#666] pl-[6px]">
          <span className="text-[28px] leading-[32px] text-[#222]">1:01:000</span>
          <span className="text-[15px] leading-[16px] text-[#444]">00:00:00.000</span>
        </div>
        <div className="flex-1 flex items-center text-[12px]">
          <div className="w-[65px] h-full flex items-center justify-center gap-[12px] border-r border-[#777]">
            <svg viewBox="0 0 18 18" className="w-[18px] h-[18px]" fill="none" stroke="#333" strokeWidth="1.2">
              <circle cx="9" cy="9" r="7.5" />
              <path d="M6.5 4 V8 M11.5 4 V8" />
              <path d="M5 8 H13 C13 11 11 12 9 12 C7 12 5 11 5 8 Z M9 12 V15" fill="#333" />
            </svg>
            <svg viewBox="0 0 18 18" className="w-[18px] h-[18px]" fill="none" stroke="#333" strokeWidth="1.2">
              <circle cx="9" cy="9" r="7.5" strokeDasharray="2 1.2" />
              <path d="M6 13 L12 5 M5 7 h2 M11 12 h2" />
            </svg>
          </div>
          <div className="w-[40px] h-full pt-[2px] flex flex-col items-center justify-center leading-[14px] border-r border-[#777]"><span>48</span><span>24</span></div>
          <div className="w-[77px] h-full pt-[2px] flex items-center justify-center border-r border-[#777]">180.00</div>
          <div className="flex-1 pt-[2px] text-center">4/4</div>
        </div>
      </div>
      <div className="ml-[15px] w-[14px] flex flex-col items-center pt-[16px] text-[#ccc]">
        <span className="w-0 h-0 border-y-[6px] border-y-transparent border-l-[9px] border-l-[#d0d0d0]" />
        <span className="mt-[17px] w-[12px] h-[12px] rounded-full bg-[#d0d0d0]" />
        <svg viewBox="0 0 14 14" className="mt-[16px] w-[14px] h-[14px]" fill="none" stroke="#c4c4c4" strokeWidth="1"><path d="M5 1 L1 13 H13 L9 1 Z M4 13 L10 4" /></svg>
      </div>
    </div>
  );
}

const menus = [
  ['ファイル', 'F', 'w-[93px]'],
  ['編集', 'E', 'w-[80px]'],
  ['表示', 'V', 'w-[82px]'],
  ['挿入', 'I', 'w-[75px]'],
  ['プロセス', 'P', 'w-[98px]'],
  ['プロジェクト', 'J', 'w-[117px]'],
  ['ユーティリティ', 'U', 'w-[130px]'],
  ['ウィンドウ', 'W', 'w-[115px]'],
  ['ヘルプ', 'H', 'w-[87px]'],
];

export default function App() {
  return (
    <div className="w-[1920px] h-[1080px] overflow-hidden relative bg-[#222] flex flex-col border-t border-l border-b border-[#4c6478] [font-family:'Noto_Sans','Noto_Sans_CJK_JP',sans-serif] [font-feature-settings:'palt']">
      {/* title bar */}
      <div className="h-[31px] flex items-center pl-[4px] pb-[3px] text-[#e4e4e4]">
        <Logo className="w-[16px] h-[16px]" />
        <span className="ml-[6px] text-[16px]">Cakewalk Sonar - [test.cwp*]</span>
        <Minus className="ml-auto w-[14px] h-[14px]" strokeWidth={1.2} />
        <span className="ml-[38px] w-[11px] h-[11px] border border-[#e4e4e4] rounded-[1px]" />
        <X className="ml-[39px] mr-[19px] w-[15px] h-[15px]" strokeWidth={1.1} />
      </div>
      {/* menu */}
      <div className="h-[28px] flex items-center pl-[3px] pb-[6px] text-[14px] text-[#dcdcdc]">
        <File className="w-[13px] h-[15px] text-[#ccc]" strokeWidth={1.3} />
        <div className="ml-[18px] -mt-[2px] flex">
          {menus.map(([t, k, w]) => (
            <span key={k} className={`${w} whitespace-nowrap`}>{t}(<u>{k}</u>)</span>
          ))}
        </div>
        <span className="flex items-center -mt-[2px]">
          <Search className="w-[13px] h-[13px] -scale-x-100" strokeWidth={1.3} />
          <span className="ml-[4px]">アシスト</span>
        </span>
        <svg viewBox="0 0 14 14" className="ml-auto w-[13px] h-[13px]" fill="none" stroke="#ccc" strokeWidth="1.1"><path d="M1 1 H13 V13 M9 5 L1 13 M3 5 H9 V11" /></svg>
        <div className="ml-[12px] w-[154px] h-[24px] rounded-[2px] bg-[#3a3a3a] flex items-center pl-[5px] pr-[3px] text-[10px] text-[#b0b0b0]">
          <Crown className="w-[13px] h-[13px] text-[#d6962a]" strokeWidth={1.4} />
          <span className="ml-[2px] w-[14px] h-[14px] border border-[#999] rounded-[1px] border-t-[3px]" />
          <span className="ml-[4px]">ワークスペース</span>
          <CH className="ml-auto w-[14px] h-[14px] text-[#aaa]" />
        </div>
        <Minus className="ml-[4px] w-[12px] h-[12px] text-[#aaa]" strokeWidth={1.2} />
        <span className="ml-[9px] w-[8px] h-[8px] border border-[#aaa]" />
        <X className="ml-[10px] mr-[5px] w-[11px] h-[11px] text-[#aaa]" strokeWidth={1.2} />
      </div>
      {/* license bar */}
      <div className="mx-[4px] h-[47px] rounded-[4px] bg-[#3c3c3c] flex items-center pl-[12px] pr-[13px] text-[12px]">
        <span className="text-[#b8b8b8]">Free License</span>
        <span className="ml-[7px] text-[#8c8c8c]">Upgrade your experience with Membership</span>
        <div className={`ml-auto w-[140px] h-[25px] rounded-[3px] ${ORANGE} flex items-center justify-center gap-[3px] text-[#33261a]`}>
          <Crown className="w-[17px] h-[17px]" strokeWidth={1.3} />
          Get Membership
        </div>
      </div>
      <div className="h-[4px]" />
      <Toolbar />
      <div className="h-[6px]" />
      <div className="flex pl-[6px]">
        <LeftPanel />
        <div className="w-[7px] pt-[396px] flex justify-center">
          <span className="w-[2px] h-[62px] bg-[#454545]" />
        </div>
        <CenterPanel />
        <RightRail />
      </div>

      {/* highlight frame */}
      <div className="absolute left-[281px] top-[443px] w-[1604px] h-[165px] border-[12px] border-[#fff25a] pointer-events-none" />
    </div>
  );
}
